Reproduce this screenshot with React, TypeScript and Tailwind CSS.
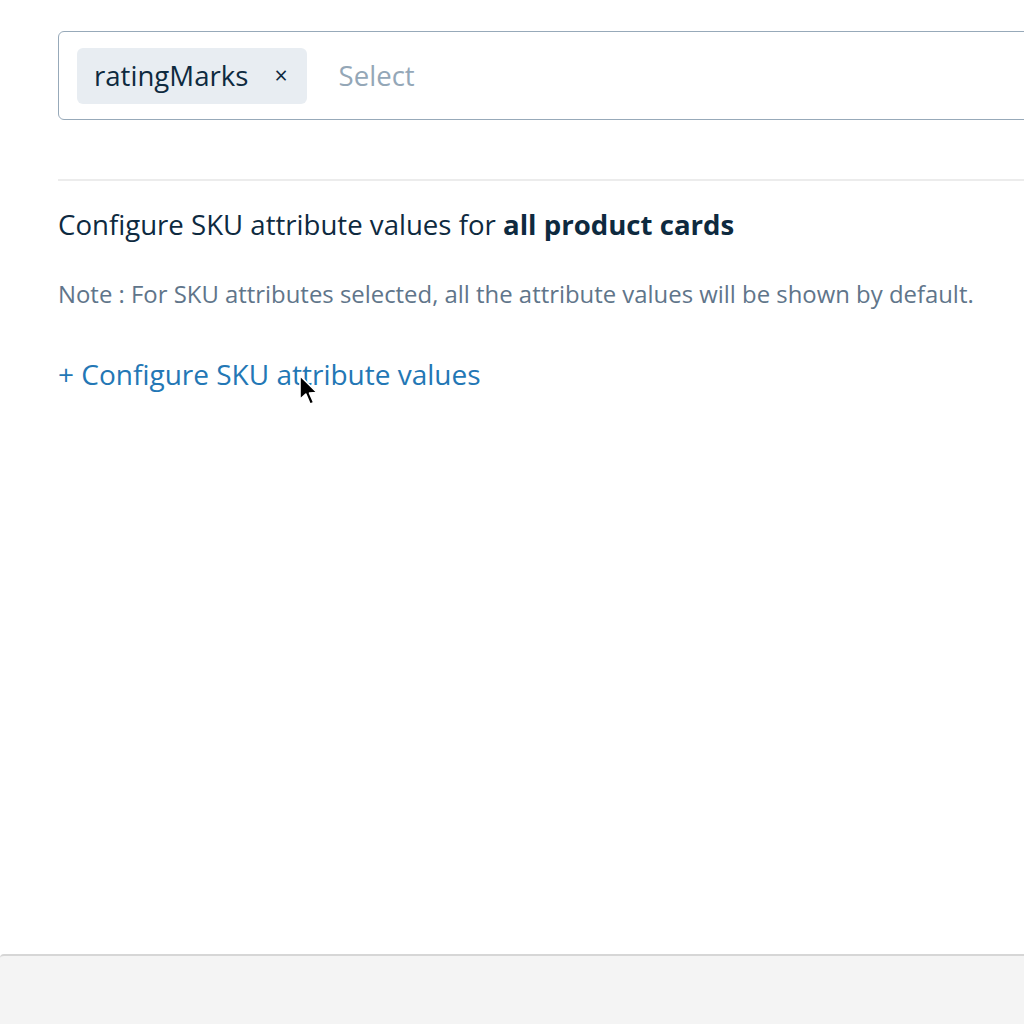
import React from "react";

export default function App() {
  return (
    <div className="relative w-[1024px] h-[1024px] bg-white overflow-hidden flex flex-col" style={{ fontFamily: '"Open Sans", sans-serif' }}>
      <div className="flex-1 pl-[58px] pt-[31px]">
        <div className="w-[1000px] h-[89px] border-[1.5px] border-[#97a9b9] rounded-[6px] flex items-center pl-[18px] gap-[32px]">
          <div className="h-[56px] bg-[#e8edf2] rounded-[6px] flex items-center pl-[17px] pr-[19px] gap-[26px]">
            <span className="text-[27.6px] text-[#0e2a3f]">ratingMarks</span>
            <span className="text-[23px] text-[#0e2a3f] leading-none">×</span>
          </div>
          <span className="text-[27.6px] text-[#94a7b7]">Select</span>
        </div>
        <div className="mt-[59px] h-[2px] bg-[#ececec] w-[1000px]" />
        <div className="mt-[23px] text-[27.6px] text-[#0e2a3f] leading-[40px]">
          Configure SKU attribute values for <span className="font-bold">all product cards</span>
        </div>
        <div className="mt-[34px] text-[23.9px] text-[#60758a] leading-[32px]">
          Note : For SKU attributes selected, all the attribute values will be shown by default.
        </div>
        <div className="mt-[44px] text-[28px] text-[#2377b5] leading-[40px]">+ Configure SKU attribute values</div>
      </div>
      <div className="h-[70px] bg-[#f4f4f4] border-t-2 border-[#d6d6d6] rounded-tl-[4px]" />
      <svg className="absolute left-[298px] top-[374px]" width="22" height="36" viewBox="0 0 20 34">
        <path d="M1.5 1.5 L1.5 24 L7 19 L11 28.5 L14.5 27 L10.5 18 L17.5 17.5 Z" fill="#000" stroke="#fff" strokeWidth="1.5" strokeLinejoin="round" />
      </svg>
    </div>
  );
}
